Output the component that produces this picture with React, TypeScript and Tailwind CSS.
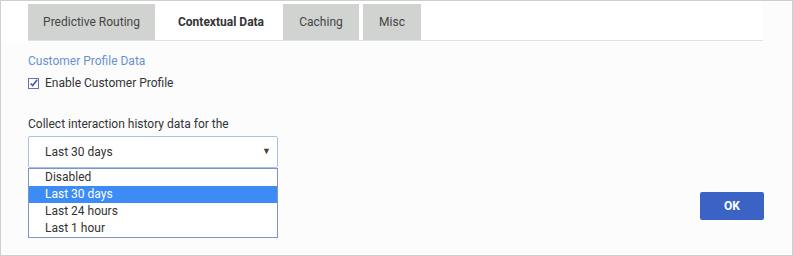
const tabs = [
  { label: "Predictive Routing", cls: "w-[127px] mr-[4px]" },
  { label: "Contextual Data", cls: "w-[124px]" },
  { label: "Caching", cls: "w-[76px] mr-[4px]" },
  { label: "Misc", cls: "w-[58px]" },
];
const options = ["Disabled", "Last 30 days", "Last 24 hours", "Last 1 hour"];

export default function App() {
  return (
    <div
      className="w-[793px] h-[256px] border border-[#cfcfcf] bg-[#fcfcfc] text-[12px] text-[#333] overflow-hidden"
      style={{ fontFamily: "Roboto, 'Liberation Sans', sans-serif" }}
    >
      <div className="flex">
        <div className="w-[27px] h-[40px] bg-white" />
        <div className="w-[735px] bg-white pt-[3px] border-b border-[#dfe3ea] flex">
          {tabs.map(({ label, cls }) => (
            <div
              key={label}
              className={
                label === "Contextual Data"
                  ? `${cls} h-[36px] flex items-center justify-center bg-white font-bold text-[#333]`
                  : `${cls} h-[36px] flex items-center justify-center bg-[#d1d3d1] text-[#444]`
              }
            >
              {label}
            </div>
          ))}
        </div>
      </div>

      <div className="pl-[27px] pr-[28px] flex justify-between">
        <div>
          <div className="mt-[12px] text-[#6b8fd3] leading-[16px]">Customer Profile Data</div>
          <label className="mt-[6px] flex items-center gap-[6px] leading-[16px]">
            <span className="w-[11px] h-[11px] border border-[#6a6fae] bg-white flex items-center justify-center">
              <svg width="11" height="11" viewBox="0 0 11 11">
                <path d="M2 5.5 L4.5 8 L10 1" fill="none" stroke="#3b50b8" strokeWidth="1.8" />
              </svg>
            </span>
            Enable Customer Profile
          </label>
          <div className="mt-[25px] leading-[16px]">Collect interaction history data for the</div>
          <div className="mt-[4px] w-[250px]">
            <div className="h-[32px] border border-[#a9c1ea] bg-white rounded-[2px] flex items-center justify-between pl-[16px] pr-[6px]">
              <span>Last 30 days</span>
              <span className="text-[9px] text-[#444]">▼</span>
            </div>
            <div className="border border-[#7b95c9] bg-white">
              {options.map((o) => (
                <div
                  key={o}
                  className={
                    o === "Last 30 days"
                      ? "h-[17px] leading-[17px] pl-[16px] bg-[#3d8cf5] text-white"
                      : "h-[17px] leading-[17px] pl-[16px] text-[#333]"
                  }
                >
                  {o}
                </div>
              ))}
            </div>
          </div>
        </div>
        <div className="pt-[151px]">
          <button className="w-[64px] h-[28px] bg-[#3a63c5] text-white font-bold rounded-[2px]">
            OK
          </button>
        </div>
      </div>
    </div>
  );
}
